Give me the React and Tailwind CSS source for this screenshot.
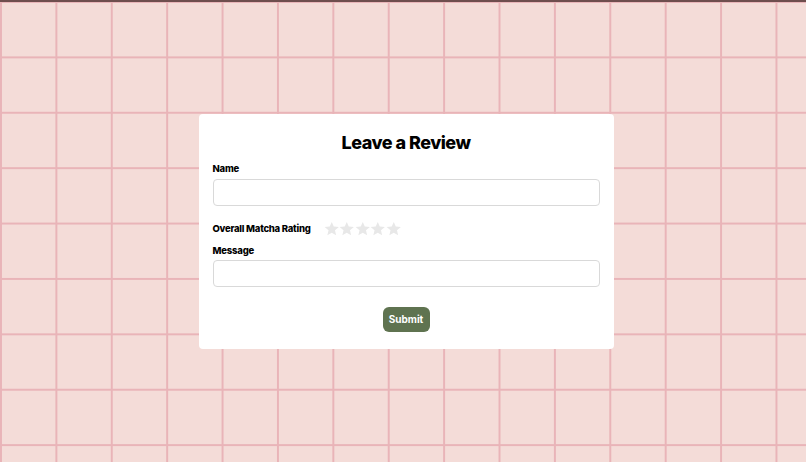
import { useState } from "react";

function Star({ filled }) {
  return (
    <svg viewBox="0 0 24 24" className="w-[15.5px] h-[15.5px]">
      <path
        d="M12 1.5l3.1 7.2 7.9.6-6 5.2 1.8 7.7L12 18.1 5.2 22.2 7 14.5 1 9.3l7.9-.6z"
        fill={filled ? "#5f7350" : "#e8e8e8"}
      />
    </svg>
  );
}

export default function App() {
  const [name, setName] = useState("");
  const [message, setMessage] = useState("");
  const [rating, setRating] = useState(0);

  return (
    <div className="relative min-h-[462px] w-full flex items-center justify-center bg-[#f4dcd8] bg-[linear-gradient(to_right,#e9b4b8_2px,transparent_2px),linear-gradient(to_bottom,#e9b4b8_2px,transparent_2px)] bg-[length:55.4px_55.4px] bg-[position:0px_1px] pl-[6px] font-['Inter','Noto_Sans',sans-serif]">
      <div className="absolute top-0 left-0 right-0 h-[2px] bg-[#6e4e4e]" />
      <form
        className="w-[415px] bg-white rounded-[4px] px-[14px] pt-[16px] pb-[17px] flex flex-col"
        onSubmit={(e) => e.preventDefault()}
      >
        <h2 className="text-[18px] leading-[26px] font-extrabold text-black text-center tracking-[-0.5px]">
          Leave a Review
        </h2>
        <label className="mt-[6px] text-[9.5px] leading-[14px] font-extrabold text-black tracking-[-0.2px]">Name</label>
        <input
          value={name}
          onChange={(e) => setName(e.target.value)}
          className="mt-[3px] h-[27px] w-full rounded-[4px] border border-[#d9d9d9] px-2 text-sm outline-none"
        />
        <div className="mt-[15px] h-[16px] flex items-center">
          <span className="text-[9.5px] leading-[14px] font-extrabold text-black tracking-[-0.25px]">Overall Matcha Rating</span>
          <div className="ml-[13px] flex items-center">
            {[1, 2, 3, 4, 5].map((n) => (
              <button type="button" key={n} onClick={() => setRating(n)} className="p-0">
                <Star filled={n <= rating} />
              </button>
            ))}
          </div>
        </div>
        <label className="mt-[7px] text-[9.5px] leading-[14px] font-extrabold text-black tracking-[-0.2px]">Message</label>
        <input
          value={message}
          onChange={(e) => setMessage(e.target.value)}
          className="mt-[2px] h-[27px] w-full rounded-[4px] border border-[#d9d9d9] px-2 text-sm outline-none"
        />
        <div className="mt-[20px] flex justify-center">
          <button
            type="submit"
            className="h-[25px] w-[47px] rounded-[6px] bg-[#5f7350] text-white text-[10px] font-bold"
          >
            Submit
          </button>
        </div>
      </form>
    </div>
  );
}
